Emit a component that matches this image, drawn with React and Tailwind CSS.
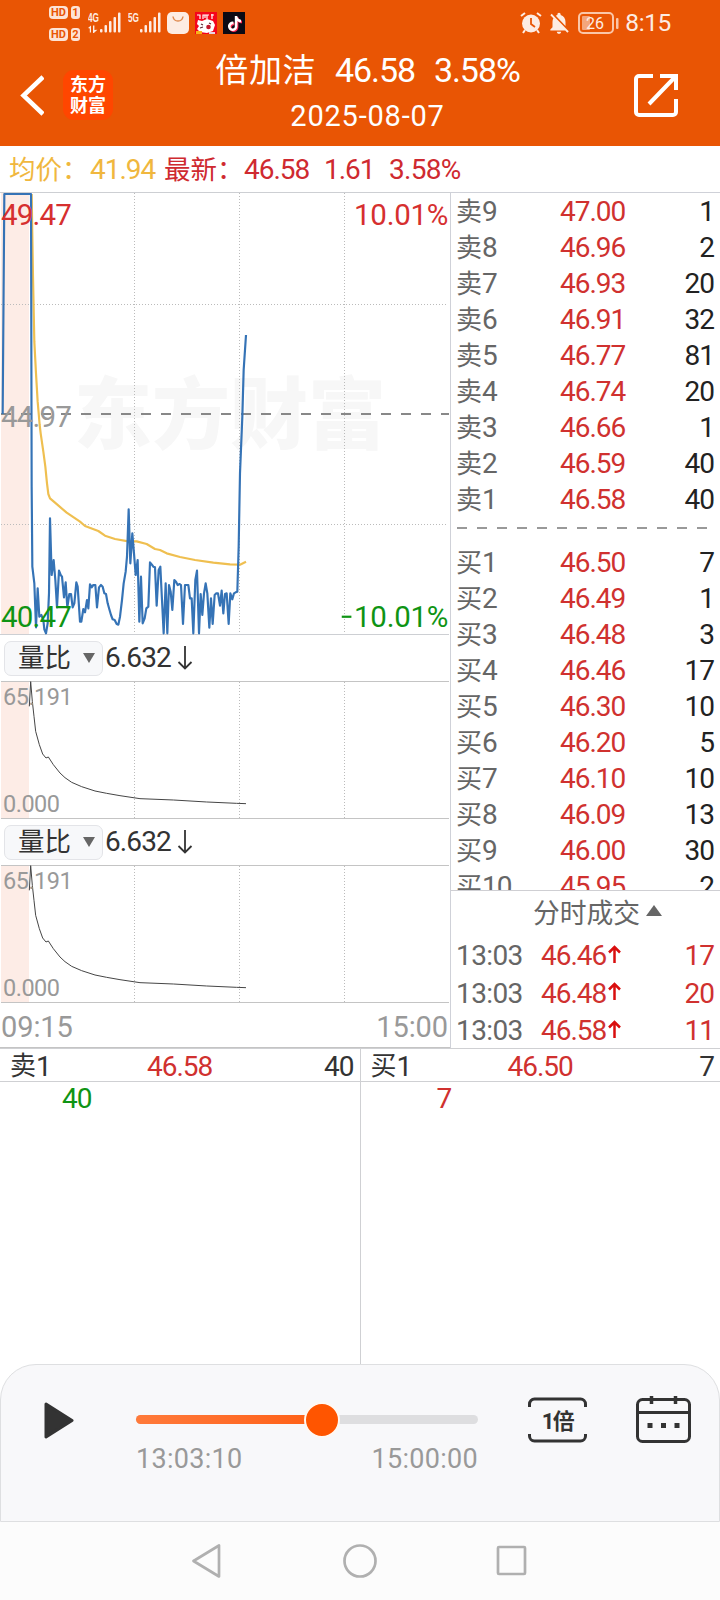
import { SiTiktok } from 'react-icons/si'
import { MdNotificationsOff } from 'react-icons/md'

const SELLS = [
  ['9', '47.00', 1],
  ['8', '46.96', 2],
  ['7', '46.93', 20],
  ['6', '46.91', 32],
  ['5', '46.77', 81],
  ['4', '46.74', 20],
  ['3', '46.66', 1],
  ['2', '46.59', 40],
  ['1', '46.58', 40],
]

const BUYS = [
  ['1', '46.50', 7],
  ['2', '46.49', 1],
  ['3', '46.48', 3],
  ['4', '46.46', 17],
  ['5', '46.30', 10],
  ['6', '46.20', 5],
  ['7', '46.10', 10],
  ['8', '46.09', 13],
  ['9', '46.00', 30],
  ['10', '45.95', 2],
]

const TRADES = [
  ['13:03', '46.46', 17],
  ['13:03', '46.48', 20],
  ['13:03', '46.58', 11],
]

// 分时线坐标，单位为 1/3 像素
const PRICE_LINE =
  '8,-18 13,-678 93,-678 95,200 97,440 103,490 108,622 113,505 118,590 124,585 130,600 133,628 138,640 143,610 147,520 150,295 155,465 161,420 166,480 171,562 177,452 182,465 186,470 192,532 197,487 202,562 208,522 213,522 218,562 223,550 229,487 233,500 240,605 244,605 250,567 255,577 261,540 265,565 270,493 275,502 280,495 286,495 291,562 297,502 303,495 308,500 313,520 318,522 323,550 328,568 333,585 338,598 344,600 350,612 355,614 360,590 366,540 371,490 377,455 381,410 386,268 391,430 397,340 402,400 407,465 413,420 418,605 423,470 428,610 434,595 439,565 445,560 450,427 455,433 460,440 465,442 470,557 476,450 481,440 486,540 491,640 497,490 502,640 507,495 512,515 517,570 523,480 528,485 533,495 539,492 543,495 549,612 555,495 560,495 565,495 570,535 575,535 580,640 586,480 591,452 597,640 602,522 607,585 612,520 617,490 622,520 628,623 633,535 638,612 644,525 649,520 654,520 660,557 665,512 670,580 675,522 680,520 686,612 691,520 697,538 702,520 707,517 712,515 716,380 720,160 727,-10 731,-150 738,-255'

const AVG_LINE =
  '95,-678 99,-430 103,-235 108,-140 113,-55 119,15 122,40 130,95 136,140 141,190 145,222 150,235 165,248 200,278 240,305 255,318 295,333 315,347 345,357 385,364 410,364 440,372 465,387 480,390 500,400 540,411 585,420 640,428 690,433 720,434 738,425'

const RATIO_LINE =
  '88,76 92,2 97,61 102,106 107,151 118,191 128,219 138,231 145,228 160,251 180,276 195,290 215,304 245,317 285,330 320,337 360,344 420,353 520,357 620,363 710,367 738,368'

function Signal({ label, data }) {
  return (
    <svg width="34" height="22" viewBox="0 0 34 22" fill="#fdece3">
      <text x="0" y="9.500" fontSize="12" fontWeight="700" fontFamily="Liberation Sans" textLength="11" lengthAdjust="spacingAndGlyphs">{label}</text>
      {data && <path d="M0 16l3-2.500v7H1.800v-4zM5 13.500h1.400v4.500l3-.2-3.500 3.200H5z" />}
      <rect x="12" y="17" width="2.500" height="3.500" rx="1" />
      <rect x="16.500" y="13" width="2.500" height="7.500" rx="1" />
      <rect x="21" y="9" width="2.500" height="11.500" rx="1" />
      <rect x="25.500" y="5" width="2.500" height="15.500" rx="1" />
      <rect x="30" y="0.500" width="2.500" height="20" rx="1" />
    </svg>
  )
}

function HdBadge({ n }) {
  return (
    <div className="flex gap-[3px] text-[11px] font-bold leading-[13px] text-[#e95504]">
      <span className="w-[19px] rounded-[4px] bg-[#fde3d5] text-center">HD</span>
      <span className="w-[9px] rounded-[3px] bg-[#fde3d5] text-center">{n}</span>
    </div>
  )
}

function StatusBar() {
  return (
    <div className="flex h-[45px] items-start pl-[49px] pr-[49px] text-[#fdece3]">
      <div className="flex flex-col gap-[9px] pt-[6px]">
        <HdBadge n="1" />
        <HdBadge n="2" />
      </div>
      <div className="ml-[8px] flex items-center gap-[6px] pt-3">
        <Signal label="4G" data />
        <Signal label="5G" />
      </div>
      <div className="ml-[5px] flex gap-[6px] pt-3">
        <svg width="22" height="22" viewBox="0 0 22 22">
          <rect width="22" height="22" rx="5" fill="#fdece3" />
          <path d="M6 4.500c1 6 9 6 10 0" fill="none" stroke="#e08a50" strokeWidth="1.500" />
        </svg>
        <svg width="22" height="22" viewBox="0 0 22 22">
          <rect width="22" height="22" fill="#f5051c" />
          <path d="M2 3h3v4M8 7V3h4M10 3v3M14 3h-2v4M16 3h3M17 2v5" fill="none" stroke="#fff" strokeWidth="1.200" />
          <path d="M3 8l4 1 5-2 6 2 2 4-2 6-6 2-7-1-3-3 2-3-2-2z" fill="#fff" />
          <path d="M6 12l2 1M14 11l2 1M5 16l3-1" stroke="#5b2a35" strokeWidth="1.200" />
          <circle cx="13.500" cy="15" r="2.300" fill="#c2182c" />
          <path d="M1 19h6v3H1z" fill="#f8b21b" />
          <path d="M14 20h6v2h-6z" fill="#e9d3e6" />
        </svg>
        <div className="flex h-[22px] w-[22px] items-center justify-center bg-[#0b0a14]">
          <SiTiktok size={15} color="#fff" className="drop-shadow-[1px_1px_0_#fe2c55]" />
        </div>
      </div>
      <div className="ml-auto flex h-[22px] items-center pt-[23px]">
        <svg width="22" height="22" viewBox="0 0 22 22">
          <circle cx="11" cy="11.500" r="9" fill="#fdece3" />
          <path d="M1 4l4-3M21 4l-4-3M5 18l-2 3M17 18l2 3" stroke="#fdece3" strokeWidth="2" />
          <path d="M11 6v6l4 3" fill="none" stroke="#e95504" strokeWidth="1.800" />
        </svg>
        <MdNotificationsOff size={26} className="ml-[4px]" />
        <svg width="42" height="22" viewBox="0 0 42 22" className="ml-[6px]">
          <rect x="1" y="1" width="34" height="20" rx="4" fill="none" stroke="#fbc6a8" strokeWidth="2" />
          <rect x="4" y="4" width="8" height="14" rx="1" fill="#f4a57b" />
          <rect x="38" y="6" width="2.500" height="11" rx="1" fill="#fbc6a8" />
          <text x="17" y="16.500" textAnchor="middle" fontSize="16" fontFamily="Roboto" fill="#fdece3">26</text>
        </svg>
        <span className="ml-[5px] text-[24.500px] leading-none tracking-[-0.4px]">8:15</span>
      </div>
    </div>
  )
}

function Header() {
  return (
    <div className="flex h-[101px] items-start pl-[20px] pr-[42px] text-white">
      <svg width="24" height="41" viewBox="0 0 24 41" className="mt-[30px]">
        <path d="M23 2L3.500 20.500 23 39" fill="none" stroke="#fff" strokeWidth="4.500" />
      </svg>
      <div className="ml-[19px] mt-[25px] flex h-[50px] w-[50px] flex-col items-center justify-center rounded-[11px] bg-[#ff4600] pb-px text-[18px] font-bold leading-[21px]">
        <span>东方</span>
        <span>财富</span>
      </div>
      <div className="flex w-[509px] flex-col items-center">
        <div className="flex h-[48px] items-center gap-[19px] pt-[3px] text-[34px] tracking-[-1.1px]">
          <span className="text-[33px] tracking-[0.6px]">倍加洁</span>
          <span>46.58</span>
          <span>3.58%</span>
        </div>
        <div className="mt-[2px] text-[29px] leading-[42px] tracking-[0.8px]">2025-08-07</div>
      </div>
      <svg width="44" height="44" viewBox="0 0 44 44" className="ml-auto mt-[28px] shrink-0" fill="none" stroke="#fff" strokeWidth="4">
        <path d="M19 3H5a3 3 0 0 0-3 3v33a3 3 0 0 0 3 3h34a3 3 0 0 0 3-3V26" />
        <path d="M26 3h16v14M42 3L15 31" />
      </svg>
    </div>
  )
}

function PriceChart() {
  return (
    <div className="relative h-[443px]">
      <svg width="450" height="443" viewBox="0 192 450 443" className="block">
        <rect x="1" y="193" width="28" height="441" fill="#fdece6" />
        <text x="74" y="443" fontSize="78" fontWeight="900" fontFamily="Noto Sans CJK SC" fill="#f7f7f7">东方财富</text>
        <g stroke="#bbb" strokeDasharray="1 2">
          <path d="M134.500 193V634M239.500 193V634M344.500 193V634M1 304.500H448M1 524.500H448" />
        </g>
        <path d="M0 192.500H450M0 634.500H449" stroke="#cdcfd3" />
        <path d="M1 414H449" stroke="#888" strokeWidth="2" strokeDasharray="10 10" />
        <g transform="translate(0 420) scale(.33333)" fill="none" strokeWidth="6.500" strokeLinejoin="round">
          <polyline points={AVG_LINE} stroke="#efbf50" />
          <polyline points={PRICE_LINE} stroke="#3573b6" />
        </g>
      </svg>
      <div className="absolute inset-0 flex flex-col justify-between text-[29.500px] leading-[34px] tracking-[-0.8px]">
        <div className="flex justify-between pl-px pr-[2px] pt-[6px] text-[#d62f2f]">
          <span>49.47</span>
          <span className="tracking-[-0.3px]">10.01%</span>
        </div>
        <div className="pl-px pt-[1px] text-[#999]">44.97</div>
        <div className="flex justify-between pb-[1px] pl-px pr-[2px] text-[#0f9414]">
          <span>40.47</span>
          <span className="flex items-center tracking-[-0.3px]">
            <span className="w-[14px] origin-left scale-x-[0.8]">−</span>10.01%
          </span>
        </div>
      </div>
    </div>
  )
}

function RatioPanel() {
  return (
    <>
      <div className="flex h-[46px] items-center pl-[4px] text-[#333]">
        <div className="flex h-[35px] w-[99px] items-center justify-between rounded-[7px] border border-[#e3e4e8] bg-[#f7f8fa] pl-[13px] pr-[7px] text-[26.500px]">
          <span>量比</span>
          <svg width="12" height="10" viewBox="0 0 12 10">
            <path d="M0 0h12L6 10z" fill="#666" />
          </svg>
        </div>
        <span className="ml-[2px] text-[28px] tracking-[-0.9px]">6.632</span>
        <svg width="16" height="25" viewBox="0 0 16 25" className="ml-[6px] mt-[-2px]" fill="none" stroke="#333" strokeWidth="1.800">
          <path d="M8 1v22M1.500 17L8 23.500 14.500 17" />
        </svg>
      </div>
      <div className="relative h-[138px]">
        <svg width="450" height="138" viewBox="0 0 450 138" className="block">
          <rect x="1" y="1" width="28" height="136" fill="#fdece6" />
          <path d="M134.500 1V137M239.500 1V137M344.500 1V137" stroke="#bbb" strokeDasharray="1 2" />
          <path d="M1 .5H449M1 137.500H449" stroke="#c4c4c4" />
          <polyline points={RATIO_LINE} transform="scale(.33333)" fill="none" stroke="#444" strokeWidth="3" />
        </svg>
        <div className="absolute inset-0 flex flex-col justify-between pl-[3px] pt-[1px] text-[23.500px] leading-[30px] tracking-[-0.5px] text-[#999]">
          <span>65.191</span>
          <span>0.000</span>
        </div>
      </div>
    </>
  )
}

function BookRow({ side, row }) {
  const [level, price, volume] = row
  return (
    <div className="flex h-[36px] shrink-0 items-center pt-[2px] text-[28px] tracking-[-1px]">
      <div className="flex w-[104px] items-center text-[#666]">
        <span className="text-[26px] tracking-normal">{side}</span>
        {level}
      </div>
      <span className="text-[#d0312f]">{price}</span>
      <span className="ml-auto text-[#222]">{volume}</span>
    </div>
  )
}

function OrderBook() {
  return (
    <div className="flex w-[270px] flex-col border-l border-t border-[#cfd1d8]">
      <div className="flex h-[697px] flex-col overflow-hidden pl-[5px] pr-[6px]">
        {SELLS.map((row) => (
          <BookRow key={row[0]} side="卖" row={row} />
        ))}
        <svg width="252" height="27" viewBox="0 0 252 27" className="ml-px shrink-0">
          <path d="M0 11H250" stroke="#999" strokeWidth="2" strokeDasharray="10 10" />
        </svg>
        {BUYS.map((row) => (
          <BookRow key={row[0]} side="买" row={row} />
        ))}
      </div>
      <div className="flex h-[46px] items-center justify-center gap-[6px] border-t border-[#cfcfd3] pl-[24px] pt-[3px] text-[26.800px] text-[#666]">
        <span>分时成交</span>
        <svg width="16" height="11" viewBox="0 0 16 11" className="mb-[8px]">
          <path d="M8 0l8 11H0z" fill="#666" />
        </svg>
      </div>
      {TRADES.map(([time, price, volume], i) => (
        <div key={i} className="flex h-[37.500px] items-center pl-[5px] pr-[6px] pt-[4px] text-[28px] tracking-[-1px]">
          <span className="w-[85px] tracking-[-0.6px] text-[#666]">{time}</span>
          <span className="text-[#d0312f]">{price}</span>
          <svg width="13" height="18" viewBox="0 0 13 18" className="mb-[5px] ml-[2px]" fill="none" stroke="#d90e0e" strokeWidth="2.500">
            <path d="M6.500 18V2M1 7.500L6.500 2 12 7.500" />
          </svg>
          <span className="ml-auto text-[#d0312f]">{volume}</span>
        </div>
      ))}
    </div>
  )
}

function QueueColumn({ side, price, volume, children }) {
  return (
    <div className="flex-1 border-r border-[#cfd0d3] last:border-r-0">
      <div className="flex h-[33px] items-center border-b border-[#cfd0d3] pl-[10px] pr-[6px] pt-[3px] text-[28px] tracking-[-1px] text-[#333]">
        <span className="text-[26px] tracking-normal">{side}</span>
        <span className="w-[111px]">1</span>
        <span className="text-[#d0312f]">{price}</span>
        <span className="ml-auto">{volume}</span>
      </div>
      <div className="text-[28px] leading-[33px] tracking-[-1px]">{children}</div>
    </div>
  )
}

function Player() {
  return (
    <div className="flex h-[158px] items-start rounded-t-[36px] border border-[#dedfe1] bg-[#f8f8fa] pl-[43px] pr-[28px]">
      <svg width="30" height="37" viewBox="0 0 30 37" className="mt-[37px]">
        <path d="M2 2L28 18.500 2 35z" fill="#333" stroke="#333" strokeWidth="3" strokeLinejoin="round" />
      </svg>
      <div className="ml-[62px] w-[342px] pt-[37px]">
        <div className="relative flex h-[35px] items-center">
          <div className="h-[9px] w-full rounded-full bg-[#dedee0]" />
          <div className="absolute left-0 h-[9px] w-[186px] rounded-l-full bg-gradient-to-r from-[#ff7a3a] to-[#ff5f12]" />
          <div className="absolute left-[168px] h-[36px] w-[36px] rounded-full border-2 border-[#fff8f2] bg-[#ff5500]" />
        </div>
        <div className="mt-[5px] flex justify-between text-[27px] leading-[34px] tracking-[0.3px] text-[#999]">
          <span>13:03:10</span>
          <span>15:00:00</span>
        </div>
      </div>
      <div className="relative ml-auto mt-[32px] flex h-[46px] w-[59px] items-center justify-center pt-[4px]">
        <svg width="59" height="46" viewBox="0 0 59 46" className="absolute inset-0" fill="none" stroke="#333" strokeWidth="3">
          <path d="M1.500 10V7a5 5 0 0 1 5-5H52.500a5 5 0 0 1 5 5V10M1.500 37V39a5 5 0 0 0 5 5H52.500a5 5 0 0 0 5-5V37" />
        </svg>
        <span className="text-[22px] font-bold leading-none tracking-[-1.5px] text-[#333]">1倍</span>
      </div>
      <svg width="55" height="48" viewBox="0 0 55 48" className="ml-[49px] mt-[30px]" fill="none" stroke="#333" strokeWidth="3">
        <rect x="1.500" y="4.500" width="52" height="42" rx="5" />
        <path d="M2 17.500H53" />
        <path d="M15.500 1v8M39.500 1v8" strokeWidth="3.500" />
        <path d="M11.500 30.500h5M25 30.500h5M38.500 30.500h5" strokeWidth="5" />
      </svg>
    </div>
  )
}

export default function App() {
  return (
    <div className="flex h-[1600px] w-[720px] flex-col overflow-hidden bg-white font-['Roboto','Noto_Sans_CJK_SC',sans-serif]">
      <div className="bg-[#e95504]">
        <StatusBar />
        <Header />
      </div>

      <div className="flex h-[46px] items-center pl-[9px] pt-[2px] text-[28px] tracking-[-1px] text-[#cf2a30]">
        <span className="w-[81px] whitespace-nowrap text-[26.500px] tracking-normal text-[#f0b73e]">均价：</span>
        <span className="w-[74px] text-[#f0b73e]">41.94</span>
        <span className="w-[80px] whitespace-nowrap text-[26.500px] tracking-normal">最新：</span>
        <span className="w-[80px]">46.58</span>
        <span className="w-[65px]">1.61</span>
        <span className="tracking-[-0.7px]">3.58%</span>
      </div>

      <div className="flex h-[856px]">
        <div className="w-[450px]">
          <PriceChart />
          <RatioPanel />
          <RatioPanel />
          <div className="flex h-[45px] items-center justify-between border-b border-[#c4c4c4] pl-px pr-[2px] pt-[5px] text-[29px] tracking-[-0.1px] text-[#999]">
            <span>09:15</span>
            <span>15:00</span>
          </div>
        </div>
        <OrderBook />
      </div>

      <div className="flex h-[316px] border-t border-[#cfd0d3]">
        <QueueColumn side="卖" price="46.58" volume="40">
          <span className="pl-[62px] text-[#0f9414]">40</span>
        </QueueColumn>
        <QueueColumn side="买" price="46.50" volume="7">
          <span className="pl-[76px] text-[#d0312f]">7</span>
        </QueueColumn>
      </div>

      <Player />

      <div className="flex h-[78px] items-center justify-center bg-[#fcfcfc]">
        <svg width="336" height="36" viewBox="0 0 336 36" fill="none" stroke="#b0b0b0" strokeWidth="2.700" strokeLinejoin="round">
          <path d="M27 2.500V33.500L1.500 18z" />
          <circle cx="168" cy="18" r="15.500" />
          <rect x="306" y="4" width="27" height="27" rx="1" />
        </svg>
      </div>
    </div>
  )
}
